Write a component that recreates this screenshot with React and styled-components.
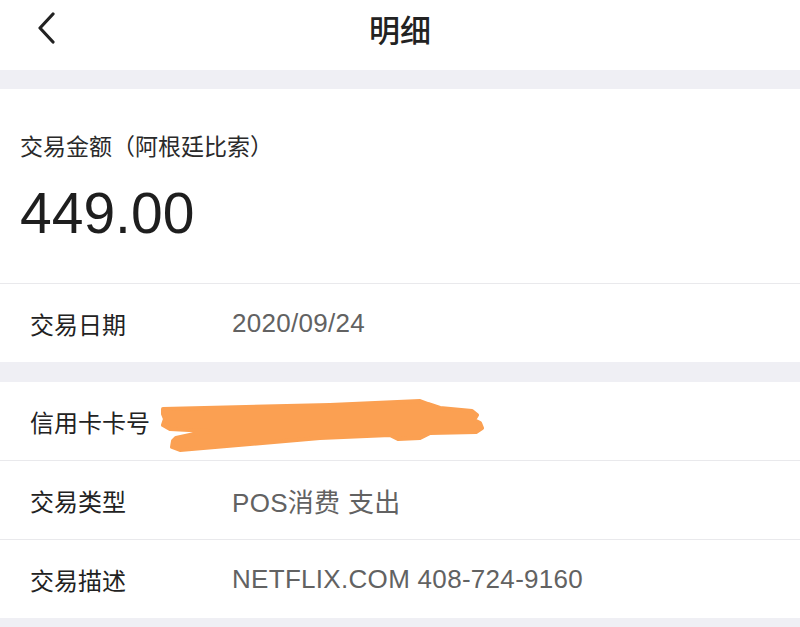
import React from 'react';
import styled, { createGlobalStyle } from 'styled-components';

const GlobalStyle = createGlobalStyle`
  html, body {
    margin: 0;
    padding: 0;
    background: #efeff4;
  }
  body {
    font-family: "Liberation Sans", "Noto Sans CJK SC", sans-serif;
    -webkit-font-smoothing: antialiased;
  }
`;

const Page = styled.div`
  width: 800px;
  min-height: 627px;
  background: #efeff4;
  overflow: hidden;
`;

const NavBar = styled.header`
  height: 56px;
  padding-bottom: 14px;
  background: #fff;
  display: flex;
  align-items: center;
  position: relative;
`;

const BackButton = styled.button`
  width: 80px;
  height: 56px;
  border: 0;
  background: none;
  padding: 0 0 0 36px;
  display: flex;
  align-items: center;
  cursor: pointer;
`;

const Title = styled.h1`
  position: absolute;
  left: 0;
  right: 0;
  top: 0;
  height: 56px;
  margin: 0;
  display: flex;
  align-items: center;
  justify-content: center;
  font-family: "Noto Sans CJK SC", sans-serif;
  font-size: 31px;
  font-weight: 500;
  color: #222;
  pointer-events: none;
`;

const Section = styled.section`
  background: #fff;
  margin-top: ${(p) => p.gap}px;
`;

const AmountBlock = styled.div`
  padding: 39px 20px 40px;
  display: flex;
  flex-direction: column;
  gap: 21px;
  border-bottom: 1px solid #e9e9ec;
`;

const AmountLabel = styled.div`
  font-family: "Noto Sans CJK SC", sans-serif;
  font-size: 23px;
  line-height: 34px;
  color: #2a2a2a;
`;

const Amount = styled.div`
  font-family: "Liberation Sans", sans-serif;
  font-size: 57px;
  line-height: 60px;
  color: #1e1e1e;
`;

const Row = styled.div`
  position: relative;
  height: 78px;
  padding: 0 30px;
  display: flex;
  align-items: center;
  & + & {
    border-top: 1px solid #e9e9ec;
  }
`;

const Label = styled.span`
  width: 202px;
  flex-shrink: 0;
  font-family: "Noto Sans CJK SC", sans-serif;
  font-size: 24px;
  color: #222;
`;

const Value = styled.span`
  font-family: "Liberation Sans", "Noto Sans CJK SC", sans-serif;
  font-size: 26px;
  color: #626262;
  letter-spacing: 0.3px;
`;

const Scribble = styled.svg`
  position: absolute;
  left: 160px;
  top: 13px;
`;

function Redaction() {
  return (
    <Scribble width="330" height="60" viewBox="0 0 330 60">
      <path
        d="M3 14 L170 10 L260 6 L268 9 L280 13 L312 16 L317 20 L314 25 L320 28 L322 33 L316 37 L270 38 L260 43 L238 44 L230 40 L160 43 L20 55 L12 52 L13 46 L16 43 L48 36 L10 34 L3 30 L5 24 L3 19 Z"
        fill="#fba052"
        stroke="#fba052"
        strokeWidth="4"
        strokeLinejoin="round"
      />
    </Scribble>
  );
}

function DetailRow({ label, value, children }) {
  return (
    <Row>
      <Label>{label}</Label>
      {value && <Value>{value}</Value>}
      {children}
    </Row>
  );
}

export default function App() {
  return (
    <Page>
      <GlobalStyle />
      <NavBar>
        <BackButton aria-label="返回">
          <svg width="22" height="32" viewBox="0 0 22 32">
            <path d="M17 2 L4 16 L17 30" fill="none" stroke="#222" strokeWidth="3.2" strokeLinecap="round" strokeLinejoin="round" />
          </svg>
        </BackButton>
        <Title>明细</Title>
      </NavBar>

      <Section gap={19}>
        <AmountBlock>
          <AmountLabel>交易金额（阿根廷比索）</AmountLabel>
          <Amount>449.00</Amount>
        </AmountBlock>
        <DetailRow label="交易日期" value="2020/09/24" />
      </Section>

      <Section gap={20}>
        <DetailRow label="信用卡卡号">
          <Redaction />
        </DetailRow>
        <DetailRow label="交易类型" value="POS消费 支出" />
        <DetailRow label="交易描述" value="NETFLIX.COM 408-724-9160" />
      </Section>
    </Page>
  );
}
